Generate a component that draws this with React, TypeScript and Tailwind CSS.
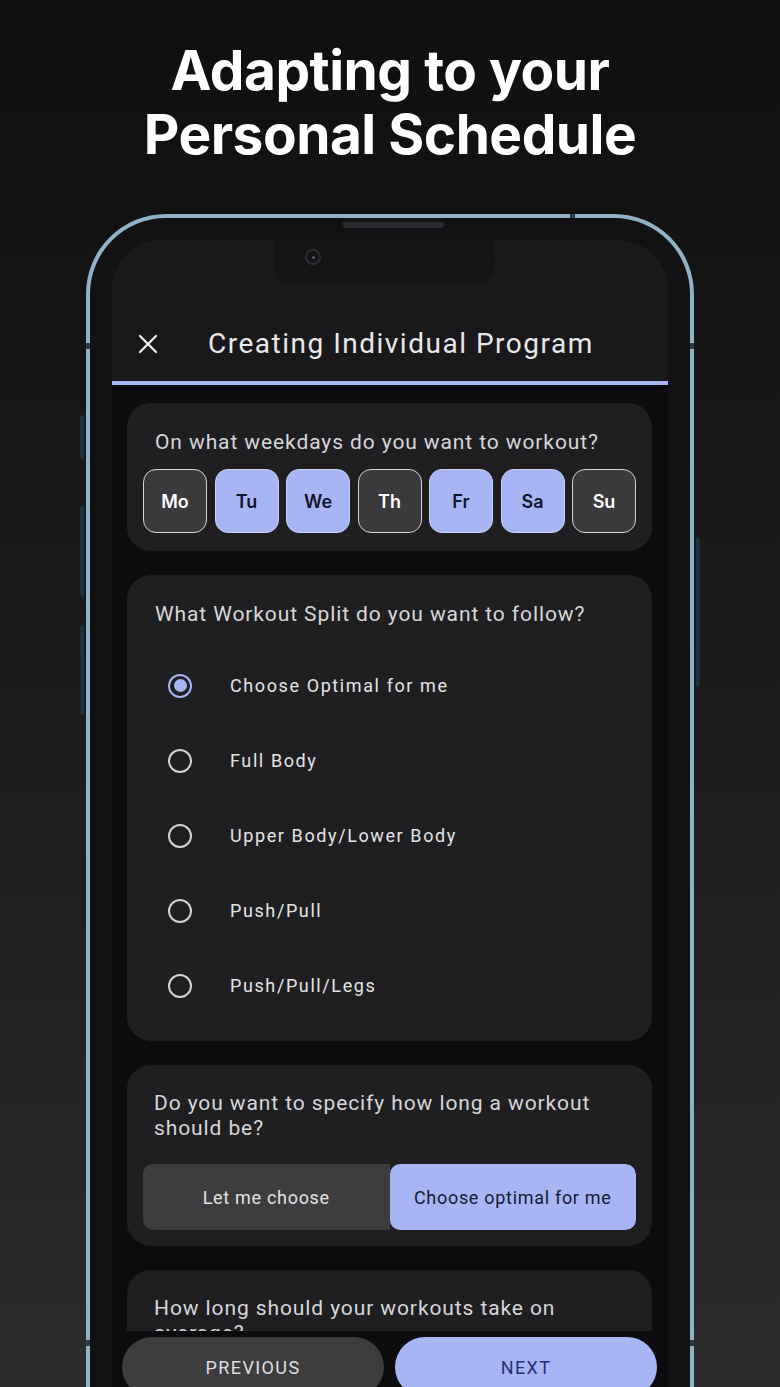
import React from "react";

const days = [
  { label: "Mo", on: false },
  { label: "Tu", on: true },
  { label: "We", on: true },
  { label: "Th", on: false },
  { label: "Fr", on: true },
  { label: "Sa", on: true },
  { label: "Su", on: false },
];

const splits = ["Choose Optimal for me", "Full Body", "Upper Body/Lower Body", "Push/Pull", "Push/Pull/Legs"];

const roboto = "font-['Roboto','Liberation_Sans',sans-serif]";

function Radio({ checked }: { checked: boolean }) {
  if (checked) {
    return (
      <span className="flex h-[24px] w-[24px] items-center justify-center rounded-full border-[2.5px] border-[#a7b5f5]">
        <span className="h-[13px] w-[13px] rounded-full bg-[#a7b5f5]" />
      </span>
    );
  }
  return <span className="h-[24px] w-[24px] rounded-full border-2 border-[#d2d2d4]" />;
}

export default function App() {
  return (
    <div className="flex h-[1387px] w-[780px] flex-col items-center overflow-hidden bg-linear-to-b from-[#0f0f0f] via-[#1b1b1b] to-[#2c2c2c]">
      {/* Headline */}
      <h1 className="pt-[38px] text-center font-['Inter',sans-serif] text-[55px] leading-[64px] font-bold tracking-[-0.5px] text-white">
        Adapting to your
        <br />
        Personal Schedule
      </h1>

      {/* Phone */}
      <div className="relative mt-[48px] flex w-[608px] flex-1 flex-col rounded-t-[80px] border-4 border-b-0 border-[#90b2c6] bg-[#121214] px-[22px] pt-[22px]">
        {/* frame details */}
        <div className="absolute top-[4px] left-[253px] h-[6px] w-[101px] rounded-b-[4px] bg-[#2a2c2f]" />
        <div className="absolute -top-[4px] left-[480px] h-[4px] w-[5px] bg-[#2b3a44]" />
        <div className="absolute top-[125px] -left-[4px] h-[6px] w-[4px] bg-[#2b3a44]" />
        <div className="absolute top-[125px] -right-[4px] h-[6px] w-[4px] bg-[#2b3a44]" />
        <div className="absolute top-[1122px] -left-[4px] h-[6px] w-[4px] bg-[#2b3a44]" />
        <div className="absolute top-[1122px] -right-[4px] h-[6px] w-[4px] bg-[#2b3a44]" />
        <div className="absolute top-[197px] -left-[10px] h-[45px] w-[4px] rounded-l bg-[#1d3140]" />
        <div className="absolute top-[287px] -left-[10px] h-[92px] w-[4px] rounded-l bg-[#1d3140]" />
        <div className="absolute top-[407px] -left-[10px] h-[90px] w-[4px] rounded-l bg-[#1d3140]" />
        <div className="absolute top-[319px] -right-[10px] h-[150px] w-[4px] rounded-r bg-[#1d3140]" />

        {/* Screen */}
        <div className="flex min-h-0 flex-1 flex-col overflow-hidden rounded-t-[50px] bg-[#19191c]">
          <div className="relative h-[64px] shrink-0">
            <div className="absolute top-0 left-[162px] h-[45px] w-[221px] rounded-b-[22px] bg-[#141416]">
              <div className="absolute top-[9px] left-[31px] flex h-[16px] w-[16px] items-center justify-center rounded-full border-2 border-[#2c2d30]">
                <span className="h-[3px] w-[3px] rounded-full bg-[#5a6066]" />
              </div>
            </div>
          </div>

          {/* Header */}
          <div className={`flex h-[77px] shrink-0 items-center gap-[50px] pt-[3px] pl-[26px] ${roboto}`}>
            <svg width="20" height="20" viewBox="0 0 20 20" className="shrink-0">
              <path d="M2 2 L18 18 M18 2 L2 18" stroke="#f2f2f2" strokeWidth="2.2" strokeLinecap="round" />
            </svg>
            <span className="text-[28px] tracking-[1.5px] text-[#e8e8e8]">Creating Individual Program</span>
          </div>
          <div className="h-[4px] shrink-0 bg-[#a7b5f5]" />

          {/* Scroll content */}
          <div className={`flex h-[946px] shrink-0 flex-col gap-[24px] overflow-hidden bg-[#0c0c0e] pt-[18px] pr-[16px] pl-[15px] ${roboto}`}>
            <div className="shrink-0 rounded-[24px] bg-[#1f1f22] px-[16px] pt-[25px] pb-[18px]">
              <p className="pl-[12px] text-[21px] leading-[28px] tracking-[0.9px] text-[#d6d6d8]">
                On what weekdays do you want to workout?
              </p>
              <div className="mt-[13px] flex justify-between">
                {days.map((d) => (
                  <div
                    key={d.label}
                    className={`flex h-[64px] w-[64px] items-center justify-center rounded-[13px] border-[1.5px] font-['Inter',sans-serif] text-[18px] font-semibold ${
                      d.on ? "border-[#c9d0f5] bg-[#a7b5f5] text-[#10152e]" : "border-[#d4d4d4] bg-[#3a3a3c] text-white"
                    }`}
                  >
                    {d.label}
                  </div>
                ))}
              </div>
            </div>

            <div className="shrink-0 rounded-[24px] bg-[#1f1f22] px-[16px] pt-[25px] pb-[18px]">
              <p className="pl-[12px] text-[21px] leading-[28px] tracking-[0.9px] text-[#d6d6d8]">
                What Workout Split do you want to follow?
              </p>
              <div className="mt-[20px]">
                {splits.map((s, i) => (
                  <div key={s} className="flex h-[75px] items-center gap-[38px] pl-[25px]">
                    <Radio checked={i === 0} />
                    <span className="text-[18px] tracking-[1.6px] text-[#e4e4e6]">{s}</span>
                  </div>
                ))}
              </div>
            </div>

            <div className="shrink-0 rounded-[24px] bg-[#1f1f22] px-[16px] pt-[26px] pb-[16px]">
              <p className="pl-[11px] text-[21px] leading-[25px] tracking-[0.9px] text-[#d6d6d8]">
                Do you want to specify how long a workout
                <br />
                should be?
              </p>
              <div className="mt-[23px] flex h-[66px] overflow-hidden rounded-[10px] text-[18px] tracking-[0.7px]">
                <div className="flex flex-1 items-center justify-center bg-[#3d3d3f] text-[#e2e2e2]">Let me choose</div>
                <div className="flex flex-1 items-center justify-center rounded-[10px] bg-[#a7b5f5] text-[#141a33]">
                  Choose optimal for me
                </div>
              </div>
            </div>

            <div className="shrink-0 rounded-[24px] bg-[#1f1f22] px-[16px] pt-[26px] pb-[16px]">
              <p className="pl-[11px] text-[21px] leading-[25px] tracking-[0.9px] text-[#d6d6d8]">
                How long should your workouts take on
                <br />
                average?
              </p>
              <div className="h-[120px]" />
            </div>
          </div>

          {/* Bottom buttons */}
          <div className={`flex flex-1 gap-[11px] bg-[#0c0c0e] pt-[6px] pr-[11px] pl-[10px] ${roboto}`}>
            <button className="flex h-[60px] flex-1 items-center justify-center rounded-full bg-[#3d3d3f] text-[18px] tracking-[1.4px] text-[#dedede]">
              PREVIOUS
            </button>
            <button className="flex h-[60px] flex-1 items-center justify-center rounded-full bg-[#a7b5f5] text-[18px] tracking-[1.4px] text-[#22307a]">
              NEXT
            </button>
          </div>
        </div>
      </div>
    </div>
  );
}
